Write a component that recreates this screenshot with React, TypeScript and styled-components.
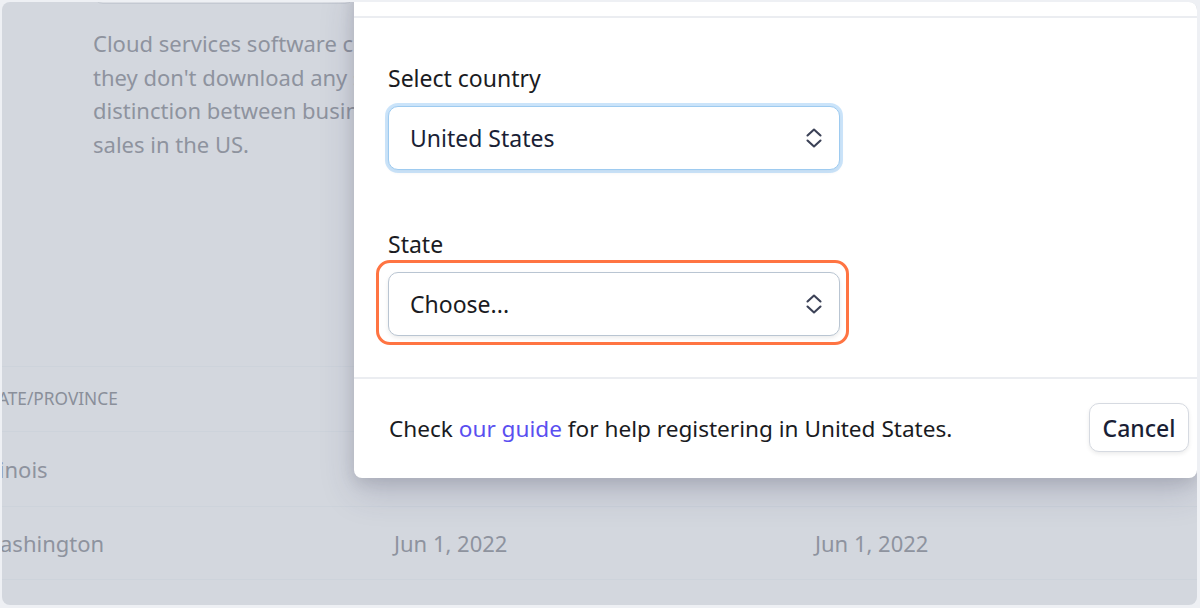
import React from "react";
import styled, { createGlobalStyle } from "styled-components";

const Global = createGlobalStyle`
  html, body { margin: 0; padding: 0; background: #eef0f4; }
  body { font-family: "Noto Sans", "Open Sans", Arial, sans-serif; }
  * { box-sizing: border-box; }
`;

const Frame = styled.div`
  width: 1200px;
  height: 608px;
  padding: 2px 3px 3px 2px;
  background: #eef0f4;
`;

const Screen = styled.div`
  position: relative;
  height: 100%;
  overflow: hidden;
  border-radius: 8px;
  background: #d3d7de;
  font-family: "Noto Sans", "Open Sans", Arial, sans-serif;
`;

const Intro = styled.div`
  padding-left: 91px;
`;

const GhostButton = styled.div`
  width: 262px;
  height: 44px;
  margin-top: -42px;
  border: 1px solid #c4c9d2;
  border-radius: 10px;
  background: #dadde3;
`;

const Description = styled.p`
  margin: 23px 0 0;
  font-size: 22px;
  line-height: 33.7px;
  color: #8e939e;
  white-space: nowrap;
`;

const Table = styled.div`
  margin-top: 204px;
  margin-left: -22px;
  display: grid;
  grid-template-columns: 414px 421px 1fr;
`;

const Row = styled.div<{ $h: number }>`
  display: contents;
  & > div {
    height: ${(p) => p.$h}px;
    border-top: 1px solid #cdd3db;
  }
`;

const HeadCell = styled.div`
  display: flex;
  align-items: center;
  font-size: 17.3px;
  color: #8a8f9a;
  text-transform: uppercase;
  white-space: nowrap;
`;

const Cell = styled.div`
  display: flex;
  align-items: center;
  font-size: 22px;
  color: #8e939e;
  white-space: nowrap;
`;

const Modal = styled.div`
  position: absolute;
  top: -22px;
  left: 352px;
  right: 0;
  background: #ffffff;
  border-radius: 8px;
  box-shadow: 0 15px 35px rgba(50, 50, 93, 0.18), 0 5px 15px rgba(0, 0, 0, 0.1);
`;

const ModalHeader = styled.div`
  height: 38px;
  border-bottom: 2px solid #ebedf1;
`;

const ModalBody = styled.div`
  padding: 45px 34px 41px;
  display: flex;
  flex-direction: column;
`;

const Field = styled.div<{ $gap?: number }>`
  display: flex;
  flex-direction: column;
  margin-top: ${(p) => p.$gap ?? 0}px;
`;

const Label = styled.label`
  font-size: 23px;
  line-height: 30px;
  color: #1a1b22;
  margin-bottom: 13px;
`;

const SelectWrap = styled.div`
  position: relative;
  width: 452px;
`;

const SelectBox = styled.div<{ $focused?: boolean }>`
  height: 64px;
  display: flex;
  align-items: center;
  justify-content: space-between;
  padding: 0 16px 0 21px;
  border-radius: 10px;
  background: #fff;
  font-size: 23px;
  color: ${(p) => (p.$focused ? "#1a1f36" : "#1a1b22")};
  border: 1.5px solid ${(p) => (p.$focused ? "#9ecbf0" : "#b9c5d2")};
  box-shadow: ${(p) =>
    p.$focused
      ? "0 0 0 3px rgba(160, 205, 245, 0.55), 0 2px 4px rgba(0,0,0,0.08)"
      : "0 2px 4px rgba(0, 0, 0, 0.08)"};
`;

const Highlight = styled.div`
  position: absolute;
  top: -12px;
  left: -12px;
  right: -9px;
  bottom: -9px;
  border: 3.5px solid #ff7442;
  border-radius: 14px;
  pointer-events: none;
`;

const Footer = styled.div`
  height: 101px;
  border-top: 2px solid #ebedf1;
  display: flex;
  align-items: center;
  justify-content: space-between;
  padding: 0 8px 0 35px;
`;

const FooterText = styled.p`
  margin: 0;
  font-size: 22.6px;
  color: #1a1b22;
  white-space: nowrap;
`;

const Link = styled.a`
  color: #5a4ff0;
  text-decoration: none;
`;

const CancelButton = styled.button`
  width: 100px;
  height: 49px;
  margin-top: -2px;
  border-radius: 10px;
  border: 1px solid #d6dae1;
  background: #fff;
  box-shadow: 0 2px 4px rgba(0, 0, 0, 0.08);
  font-family: inherit;
  font-size: 23px;
  font-weight: 500;
  color: #1a1f36;
  padding: 0;
`;

const Chevrons = () => (
  <svg width="18" height="24" viewBox="0 0 18 24" fill="none">
    <path d="M2.5 9.5 L9 3.5 L15.5 9.5" stroke="#3c4257" strokeWidth="2.1" strokeLinecap="round" strokeLinejoin="round" />
    <path d="M2.5 14.5 L9 20.5 L15.5 14.5" stroke="#3c4257" strokeWidth="2.1" strokeLinecap="round" strokeLinejoin="round" />
  </svg>
);

export default function App() {
  return (
    <>
      <Global />
      <Frame>
        <Screen>
          <Intro>
            <GhostButton />
            <Description>
              Cloud services software consists of software hosted remotely, so
              <br />
              they don't download any software. There's no
              <br />
              distinction between business-to-business and consumer
              <br />
              sales in the US.
            </Description>
          </Intro>
          <Table>
            <Row $h={65}>
              <HeadCell>State/Province</HeadCell>
              <HeadCell>Registered</HeadCell>
              <HeadCell>Effective</HeadCell>
            </Row>
            <Row $h={75}>
              <Cell>Illinois</Cell>
              <Cell />
              <Cell />
            </Row>
            <Row $h={73}>
              <Cell>Washington</Cell>
              <Cell>Jun 1, 2022</Cell>
              <Cell>Jun 1, 2022</Cell>
            </Row>
            <Row $h={40}>
              <Cell />
              <Cell />
              <Cell />
            </Row>
          </Table>

          <Modal>
            <ModalHeader />
            <ModalBody>
              <Field>
                <Label>Select country</Label>
                <SelectWrap>
                  <SelectBox $focused>
                    <span>United States</span>
                    <Chevrons />
                  </SelectBox>
                </SelectWrap>
              </Field>
              <Field $gap={59}>
                <Label>State</Label>
                <SelectWrap>
                  <SelectBox>
                    <span>Choose...</span>
                    <Chevrons />
                  </SelectBox>
                  <Highlight />
                </SelectWrap>
              </Field>
            </ModalBody>
            <Footer>
              <FooterText>
                Check <Link href="#">our guide</Link> for help registering in United States.
              </FooterText>
              <CancelButton>Cancel</CancelButton>
            </Footer>
          </Modal>
        </Screen>
      </Frame>
    </>
  );
}
